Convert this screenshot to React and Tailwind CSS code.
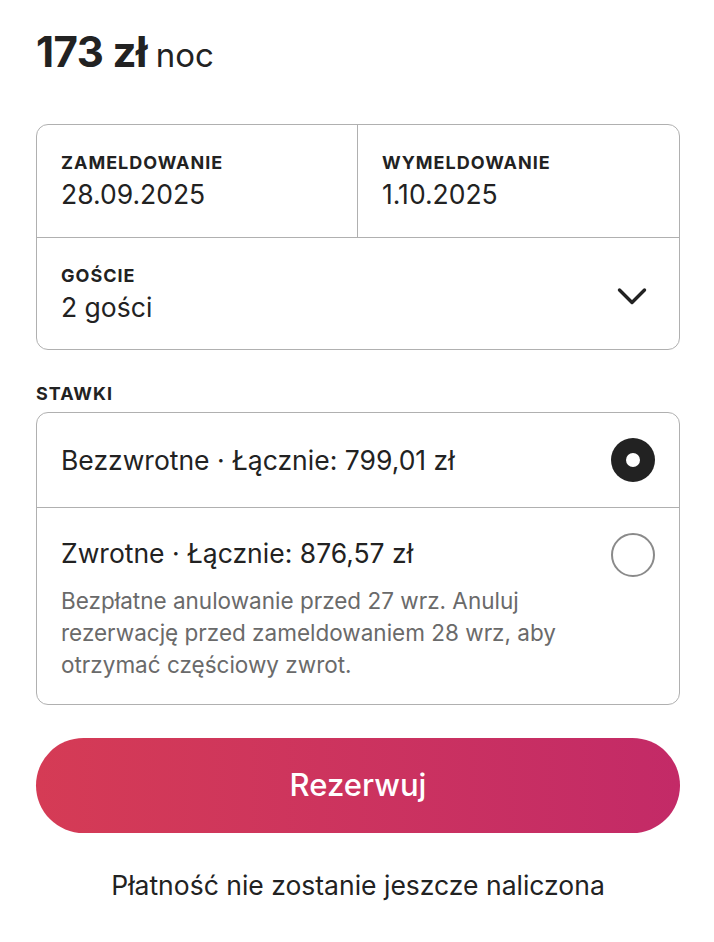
export default function App() {
  return (
    <div className="min-h-screen bg-white pl-9 pr-[34px] pt-[26px] text-[#222222]" style={{ fontFamily: "Inter, 'Noto Sans', sans-serif" }}>
      <div className="flex items-baseline gap-[9px] leading-[52px]">
        <span className="text-[42px] font-bold tracking-[-0.6px]">173 zł</span>
        <span className="text-[33px]">noc</span>
      </div>

      <div className="mt-[43px] rounded-xl border border-[#b0b0b0]">
        <div className="grid grid-cols-2 border-b border-[#b0b0b0]">
          <div className="border-r border-[#b0b0b0] px-6 pb-[27px] pt-[28px]">
            <div className="text-[18px] font-bold uppercase leading-5 tracking-[1px]">Zameldowanie</div>
            <div className="mt-[5px] text-[26.5px] leading-8">28.09.2025</div>
          </div>
          <div className="px-6 pb-[27px] pt-[28px]">
            <div className="text-[18px] font-bold uppercase leading-5 tracking-[1px]">Wymeldowanie</div>
            <div className="mt-[5px] text-[26.5px] leading-8">1.10.2025</div>
          </div>
        </div>
        <div className="flex items-center justify-between pb-[26px] pl-6 pr-[31px] pt-[28px]">
          <div>
            <div className="text-[18px] font-bold uppercase leading-5 tracking-[1px]">Goście</div>
            <div className="mt-[5px] text-[26.5px] leading-8">2 gości</div>
          </div>
          <svg width="32" height="20" viewBox="0 0 32 20" fill="none" className="mt-[2px]">
            <path d="M3.5 4L16 16.5L28.5 4" stroke="#222222" strokeWidth="3.4" strokeLinecap="round" strokeLinejoin="round" />
          </svg>
        </div>
      </div>

      <div className="mt-[34px] text-[18px] font-bold uppercase leading-5 tracking-[1px]">Stawki</div>

      <div className="mt-[8px] rounded-xl border border-[#b0b0b0]">
        <div className="flex items-center justify-between border-b border-[#b0b0b0] py-[25px] pl-6 pr-[24px]">
          <span className="text-[26.5px] leading-[44px]">Bezzwrotne · Łącznie: 799,01 zł</span>
          <span className="flex h-11 w-11 items-center justify-center rounded-full bg-[#222222]">
            <span className="h-[14px] w-[14px] rounded-full bg-white" />
          </span>
        </div>
        <div className="flex items-start justify-between pb-[23px] pl-6 pr-[24px] pt-[23px]">
          <div>
            <div className="text-[26.5px] leading-[44px]">Zwrotne · Łącznie: 876,57 zł</div>
            <p className="mt-[10px] text-[22.5px] leading-8 text-[#6a6a6a]">
              Bezpłatne anulowanie przed 27 wrz. Anuluj
              <br />
              rezerwację przed zameldowaniem 28 wrz, aby
              <br />
              otrzymać częściowy zwrot.
            </p>
          </div>
          <span className="mt-[2px] h-11 w-11 shrink-0 rounded-full border-2 border-[#8a8a8a]" />
        </div>
      </div>

      <button className="mt-[33px] flex h-[95px] w-full items-center justify-center rounded-full bg-gradient-to-r from-[#d53b55] to-[#c32a67] text-[31px] font-medium text-white">
        Rezerwuj
      </button>

      <div className="mt-[36px] text-center text-[26.5px] leading-8">Płatność nie zostanie jeszcze naliczona</div>
    </div>
  );
}
